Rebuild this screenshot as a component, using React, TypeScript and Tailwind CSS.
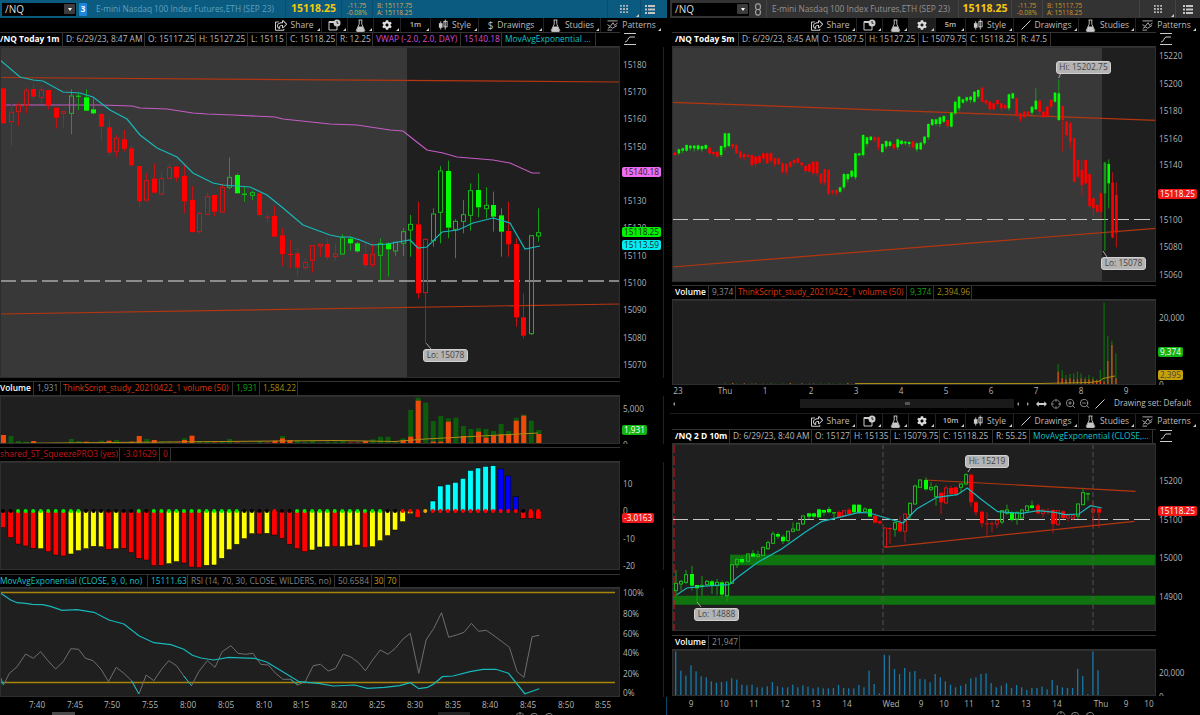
import { ReactNode } from 'react'
import clsx from 'clsx'
import { twMerge } from 'tailwind-merge'
import { FaCog, FaRegShareSquare } from 'react-icons/fa'
import { Crosshair, ZoomIn, ZoomOut } from 'lucide-react'

// Chart data is kept in reference coordinates and mapped onto page pixels.

type Candle = [number, number, number, number, string]

const CANDLES_1M: Candle[] = [
  [25, 25, 130, 130, 'Rf'], [70, 97, 125, 200, 'Rh'], [68, 76, 95, 138, 'Rh'], [25, 32, 76, 100, 'Rh'],
  [12, 27, 50, 58, 'Rf'], [18, 30, 52, 70, 'Rh'], [30, 30, 76, 88, 'Rf'], [83, 83, 113, 145, 'Rf'],
  [95, 95, 100, 143, 'Rh'], [28, 48, 100, 163, 'Gh'], [38, 47, 50, 90, 'Gf'], [28, 52, 92, 92, 'Gf'],
  [57, 88, 100, 103, 'Gf'], [100, 102, 140, 183, 'Rf'], [115, 142, 218, 228, 'Rf'], [165, 175, 214, 232, 'Rh'],
  [150, 178, 206, 215, 'Rf'], [198, 205, 256, 260, 'Rf'], [258, 258, 364, 382, 'Rf'], [280, 302, 360, 365, 'Rh'],
  [250, 296, 338, 340, 'Rf'], [275, 296, 342, 345, 'Rh'], [250, 263, 295, 298, 'Rh'], [258, 260, 293, 305, 'Rf'],
  [255, 288, 364, 400, 'Rf'], [318, 360, 456, 458, 'Rf'], [395, 400, 455, 462, 'Rh'], [338, 350, 403, 405, 'Rh'],
  [345, 345, 395, 408, 'Rf'], [310, 322, 396, 398, 'Rh'], [233, 292, 322, 328, 'Gh'], [280, 285, 340, 340, 'Gf'],
  [318, 341, 344, 365, 'Gf'], [332, 338, 346, 360, 'Gh'], [338, 340, 405, 408, 'Rf'], [400, 410, 413, 428, 'Rf'],
  [378, 408, 470, 470, 'Rf'], [445, 466, 522, 558, 'Rf'], [480, 522, 525, 565, 'Rf'], [505, 520, 563, 590, 'Rf'],
  [535, 548, 562, 570, 'Rh'], [495, 497, 541, 578, 'Rh'], [492, 493, 498, 530, 'Rh'], [475, 492, 532, 540, 'Rf'],
  [490, 522, 530, 542, 'Rh'], [462, 473, 522, 523, 'Gh'], [470, 476, 490, 512, 'Gf'], [485, 490, 514, 518, 'Gf'],
  [485, 522, 556, 565, 'Rf'], [490, 524, 554, 562, 'Rh'], [475, 490, 526, 600, 'Gh'], [487, 490, 508, 590, 'Gf'],
  [485, 487, 513, 528, 'Gh'], [445, 455, 490, 528, 'Gh'], [405, 433, 450, 530, 'Gh'], [365, 433, 640, 655, 'Rf'],
  [475, 478, 638, 790, 'Rh'], [385, 402, 482, 500, 'Gh'], [258, 273, 397, 490, 'Gh'], [242, 273, 443, 475, 'Gf'],
  [418, 424, 448, 535, 'Gh'], [360, 404, 424, 460, 'Gh'], [310, 332, 406, 452, 'Gh'], [280, 330, 382, 412, 'Gf'],
  [322, 376, 386, 415, 'Gh'], [335, 375, 410, 455, 'Gf'], [385, 406, 455, 530, 'Gf'], [365, 453, 493, 530, 'Rf'],
  [475, 492, 712, 740, 'Rf'], [640, 712, 767, 775, 'Rf'], [465, 467, 761, 765, 'Gh'], [385, 458, 468, 485, 'Gh'],
]

// top, bottom, colour, optional wick top / bottom
type Bar5 = [number, number, string, number?, number?]

const CANDLES_5M: Bar5[] = [
  [338, 345, 'R'], [328, 340, 'G'], [325, 332, 'G'], [315, 332, 'G'], [317, 325, 'G'], [317, 325, 'G'], [316, 328, 'G'], [318, 328, 'G'],
  [315, 326, 'G'], [323, 340, 'R'], [336, 342, 'R'], [335, 350, 'R'], [318, 345, 'G'], [280, 322, 'G'], [280, 318, 'G'], [313, 320, 'R'],
  [316, 340, 'R'], [335, 352, 'R'], [342, 352, 'R'], [345, 350, 'R'], [345, 375, 'R'], [350, 372, 'R'], [348, 368, 'R'], [340, 356, 'R'],
  [340, 370, 'R'], [340, 362, 'R'], [355, 373, 'R'], [355, 372, 'R'], [370, 395, 'R'], [372, 395, 'R'], [366, 380, 'R'], [360, 368, 'R'],
  [355, 368, 'R'], [368, 376, 'R'], [378, 393, 'R'], [372, 395, 'R'], [365, 400, 'R'], [365, 400, 'R'], [402, 428, 'R'], [388, 428, 'R'],
  [390, 462, 'R'], [452, 458, 'R'], [450, 460, 'R'], [442, 455, 'G'], [402, 442, 'G'], [402, 418, 'G'], [392, 410, 'G'], [340, 412, 'G'],
  [340, 346, 'G'], [285, 345, 'G'], [292, 312, 'G'], [290, 300, 'G'], [292, 300, 'R'], [292, 322, 'R'], [312, 336, 'G'], [303, 320, 'G'],
  [305, 318, 'G'], [312, 325, 'R'], [298, 322, 'G'], [302, 312, 'G'], [305, 310, 'G'], [306, 312, 'G'], [304, 322, 'R'], [310, 328, 'G'],
  [308, 328, 'G'], [290, 310, 'G'], [252, 292, 'G'], [238, 255, 'G'], [238, 252, 'G'], [232, 252, 'G'], [228, 245, 'G'], [240, 258, 'R'],
  [218, 260, 'G'], [185, 220, 'G'], [170, 205, 'G'], [178, 188, 'G'], [172, 182, 'G'], [170, 180, 'G'], [155, 185, 'G'], [150, 170, 'G'],
  [143, 185, 'R'], [180, 190, 'R'], [185, 207, 'R'], [190, 208, 'R'], [180, 192, 'R'], [190, 205, 'R'], [195, 205, 'R'], [163, 205, 'G'],
  [160, 175, 'G'], [175, 225, 'R'], [220, 238, 'R'], [215, 232, 'R'], [215, 225, 'R'], [200, 218, 'G'], [182, 208, 'G', 145, 210], [182, 215, 'R'],
  [215, 232, 'R'], [200, 228, 'R'], [180, 200, 'R'], [158, 185, 'G'], [160, 240, 'G', 118, 243], [198, 240, 'R', 198, 335], [245, 285, 'R'], [250, 305, 'R', 245, 325],
  [295, 425, 'R'], [360, 410, 'R'], [390, 435, 'R', 360, 465], [360, 430, 'R'], [402, 498, 'R'], [475, 505, 'R', 470, 530], [495, 515, 'R'], [460, 515, 'R', 455, 535],
  [368, 460, 'D', 365, 632], [372, 430, 'G', 358, 505], [428, 592, 'R', 397, 595], [465, 578, 'R', 427, 622],
]

const CANDLES_10M: Candle[] = [
  [378, 418, 440, 458, 'Gh'], [408, 412, 420, 440, 'Gh'], [378, 392, 415, 420, 'Gh'], [366, 390, 425, 440, 'Gf'], [423, 423, 433, 472, 'Gf'],
  [396, 424, 428, 455, 'Gh'], [408, 412, 422, 425, 'Gh'], [408, 412, 425, 450, 'Gf'], [405, 415, 425, 452, 'Gh'], [410, 415, 452, 458, 'Gf'],
  [412, 415, 455, 472, 'Gh'], [360, 362, 418, 420, 'Gh'], [344, 346, 362, 372, 'Gh'], [338, 345, 355, 360, 'Gf'], [328, 330, 352, 355, 'Gh'],
  [318, 328, 338, 340, 'Gf'], [320, 332, 338, 340, 'Gh'], [308, 310, 334, 336, 'Gh'], [290, 296, 314, 318, 'Gh'], [262, 270, 298, 300, 'Gh'],
  [265, 270, 278, 285, 'Gf'], [272, 278, 292, 300, 'Gf'], [260, 262, 290, 295, 'Gh'], [235, 255, 262, 265, 'Gh'], [235, 238, 258, 260, 'Gh'],
  [214, 216, 240, 242, 'Gh'], [206, 208, 218, 225, 'Gf'], [206, 208, 218, 222, 'Gf'], [194, 196, 220, 222, 'Gf'], [196, 198, 206, 215, 'Gf'],
  [188, 195, 205, 208, 'Gf'], [205, 205, 207, 222, 'Gf'], [200, 204, 220, 222, 'Rf'], [198, 200, 215, 218, 'Rh'], [192, 197, 210, 212, 'Rf'],
  [180, 182, 205, 208, 'Gf'], [180, 182, 205, 210, 'Gf'], [190, 195, 203, 206, 'Gh'], [192, 195, 218, 220, 'Gf'], [210, 216, 236, 238, 'Rf'],
  [228, 232, 238, 242, 'Rf'], [250, 252, 308, 310, 'Rh'], [250, 252, 254, 300, 'Rf'], [232, 236, 256, 278, 'Gh'], [218, 236, 262, 265, 'Rf'],
  [208, 210, 262, 295, 'Rh'], [175, 178, 212, 225, 'Gh'], [122, 126, 180, 182, 'Gh'], [106, 108, 130, 132, 'Gh'], [100, 108, 136, 140, 'Gf'],
  [115, 130, 136, 142, 'Gh'], [122, 128, 158, 185, 'Gh'], [145, 146, 175, 210, 'Rf'], [125, 132, 177, 180, 'Rh'], [125, 132, 150, 155, 'Rf'],
  [128, 130, 150, 155, 'Rf'], [118, 120, 130, 148, 'Gh'], [88, 92, 120, 124, 'Gh'], [90, 92, 175, 188, 'Rf'], [172, 175, 205, 215, 'Rf'],
  [200, 203, 238, 250, 'Rf'], [205, 238, 241, 275, 'Rf'], [232, 238, 241, 265, 'Rf'], [228, 230, 240, 252, 'Rh'], [198, 200, 234, 240, 'Gh'],
  [182, 198, 208, 212, 'Gh'], [202, 205, 228, 232, 'Gf'], [203, 205, 225, 242, 'Gh'], [195, 198, 222, 225, 'Gh'], [184, 186, 200, 205, 'Gh'],
  [170, 184, 192, 195, 'Gf'], [180, 184, 208, 212, 'Rf'], [195, 198, 208, 220, 'Rh'], [192, 200, 205, 212, 'Rf'], [196, 198, 240, 268, 'Rf'],
  [198, 200, 242, 245, 'Rh'], [198, 202, 222, 225, 'Rf'], [210, 215, 222, 232, 'Rh'], [212, 214, 222, 228, 'Rh'], [178, 180, 216, 225, 'Gh'],
  [135, 146, 182, 184, 'Gh'], [148, 148, 150, 170, 'Gf'], [175, 196, 204, 250, 'Rh'], [190, 194, 206, 252, 'Rf'],
]

const VOL_10M = [
  622, 680, 695, 664, 682, 697, 700, 712, 716, 714, 712, 703, 707, 722, 724, 722, 730, 730, 727, 714, 727, 730, 730, 722, 730,
  724, 728, 733, 730, 733, 733, 732, 723, 732, 733, 733, 723, 730, 680, 720, 748, 632, 634, 675, 690, 672, 683, 681, 705, 706,
  715, 690, 700, 712, 722, 730, 725, 720, 703, 700, 690, 688, 717, 730, 725, 718, 732, 723, 730, 738, 732, 732, 728, 736, 708,
  724, 730, 732, 732, 675, 696, 750, 622, 679,
]

const VOL_1M: [number, number][] = [
  [208, 180], [183, 208], [198, 208], [200, 208], [208, 198], [203, 208], [208, 204], [203, 208], [203, 208], [192, 208], [198, 208], [208, 200],
  [203, 208], [197, 208], [208, 197], [195, 208], [203, 208], [208, 200], [208, 183], [192, 208], [208, 195], [200, 208], [200, 208], [208, 203],
  [190, 195], [208, 182], [198, 208], [198, 208], [208, 203], [198, 208], [192, 208], [208, 203], [203, 208], [208, 204], [198, 208], [208, 203],
  [208, 197], [183, 190], [208, 195], [195, 208], [200, 208], [197, 208], [203, 208], [200, 208], [200, 208], [198, 208], [208, 203], [208, 203],
  [208, 198], [193, 208], [185, 208], [185, 208], [200, 208], [190, 195], [105, 185], [68, 77], [83, 208], [138, 200], [123, 200], [130, 140],
  [128, 205], [153, 183], [162, 203], [160, 170], [162, 188], [168, 182], [147, 178], [168, 178], [128, 137], [119, 122], [137, 208], [165, 177],
]

const SQUEEZE: [string, number, string][] = [
  ['R', 458, 'k'], ['R', 488, 'k'], ['R', 507, 'g'], ['R', 513, 'g'], ['R', 520, 'g'], ['Y', 521, 'g'], ['R', 530, 'g'], ['R', 540, 'g'], ['R', 543, 'g'],
  ['Y', 537, 'g'], ['Y', 527, 'g'], ['Y', 521, 'k'], ['Y', 514, 'k'], ['Y', 515, 'k'], ['R', 523, 'k'], ['Y', 521, 'k'], ['R', 520, 'k'], ['R', 533, 'k'],
  ['R', 550, 'g'], ['R', 555, 'k'], ['R', 572, 'g'], ['R', 572, 'g'], ['Y', 566, 'g'], ['Y', 560, 'g'], ['R', 564, 'g'], ['R', 576, 'g'], ['R', 578, 'g'],
  ['Y', 571, 'g'], ['Y', 570, 'g'], ['Y', 550, 'g'], ['Y', 524, 'g'], ['Y', 508, 'g'], ['Y', 491, 'k'], ['Y', 476, 'k'], ['R', 477, 'k'], ['Y', 475, 'k'],
  ['R', 480, 'r'], ['R', 490, 'k'], ['R', 508, 'k'], ['R', 521, 'g'], ['R', 530, 'g'], ['Y', 525, 'g'], ['Y', 516, 'g'], ['Y', 515, 'g'],
  ['R', 515, 'g'], ['Y', 515, 'g'], ['Y', 513, 'g'], ['Y', 510, 'g'], ['R', 518, 'g'], ['Y', 515, 'g'], ['Y', 497, 'g'], ['Y', 482, 'k'], ['Y', 465, 'k'],
  ['Y', 440, 'r'], ['Y', 416, 'r'], ['R', 428, 'r'], ['N', 408, 'o'], ['C', 378, 'r'], ['C', 333, 'r'], ['C', 328, 'r'], ['C', 322, 'r'], ['C', 310, 'r'],
  ['C', 286, 'r'], ['C', 279, 'r'], ['C', 274, 'r'], ['C', 272, 'r'], ['B', 282, 'r'], ['B', 303, 'r'], ['B', 365, 'r'], ['R', 430, 'k'], ['R', 430, 'r'], ['R', 432, 'r'],
]

const SQUEEZE_FILL: Record<string, string> = { R: '#ff0000', Y: '#ffff00', C: '#00ffff', B: '#0000ff', N: 'none' }
const DOT_FILL: Record<string, string> = { k: '#000000', g: '#00ee00', r: '#ff0000', o: '#e8a800' }

const VWAP_1M = 'M0 105 L33 105 L100 105 L132 106 L140 108 L167 109 L193 113 L207 114 L233 115 L275 117 L283 119 L330 124 L357 125 L390 130 L403 131 L413 139 L427 150 L443 153 L457 157 L493 160 L510 163 L532 173 L540 173'
const EMA_1M = 'M0 60 L20 77 L33 80 L43 81 L63 92 L80 93 L93 97 L110 110 L127 119 L140 135 L157 148 L177 157 L193 173 L213 183 L223 185 L250 187 L267 195 L283 208 L303 225 L330 235 L340 237 L350 237 L360 240 L372 245 L387 244 L410 240 L418 248 L427 247 L442 232 L458 230 L473 223 L493 218 L510 223 L525 249 L540 246'
const RSI_GRAY: [number, number][] = [[8, 345], [22, 310], [40, 290], [60, 252], [78, 265], [95, 245], [112, 272], [130, 297], [148, 275], [166, 236], [184, 238], [200, 265], [218, 272], [236, 297], [254, 335], [272, 292], [290, 310], [308, 332], [325, 372], [342, 315], [360, 332], [378, 298], [395, 272], [413, 287], [430, 318], [448, 347], [465, 305], [485, 272], [503, 292], [520, 245], [540, 227], [557, 250], [575, 253], [592, 250], [610, 283], [628, 285], [645, 310], [662, 328], [680, 328], [697, 345], [715, 333], [733, 287], [750, 283], [768, 303], [785, 295], [803, 253], [820, 260], [838, 277], [855, 302], [872, 270], [890, 240], [908, 253], [925, 235], [943, 207], [960, 190], [980, 310], [997, 210], [1015, 175], [1033, 128], [1050, 202], [1068, 195], [1086, 187], [1103, 160], [1120, 184], [1138, 181], [1156, 197], [1175, 215], [1192, 232], [1210, 305], [1226, 322], [1245, 200], [1262, 196]]
const RSI_TEAL: [number, number][] = [[0, 68], [25, 90], [40, 98], [60, 100], [75, 103], [100, 104], [120, 110], [145, 121], [180, 119], [220, 127], [255, 150], [290, 162], [325, 197], [360, 218], [400, 224], [430, 238], [450, 256], [470, 264], [500, 270], [535, 262], [595, 265], [625, 277], [655, 300], [700, 335], [745, 340], [780, 348], [830, 345], [860, 355], [900, 352], [935, 347], [960, 338], [980, 356], [1000, 352], [1015, 342], [1035, 320], [1060, 318], [1100, 305], [1130, 298], [1160, 298], [1190, 310], [1228, 371], [1262, 356]]
const EMA_10M: [number, number][] = [[20, 452], [50, 432], [120, 425], [175, 422], [200, 400], [260, 355], [330, 315], [400, 265], [450, 232], [500, 220], [560, 205], [590, 207], [640, 222], [690, 237], [730, 195], [790, 160], [850, 152], [880, 132], [920, 165], [970, 203], [1040, 208], [1090, 200], [1140, 205], [1170, 212], [1210, 210], [1245, 185], [1278, 192]]
const SPIKES_5M: [number, number, number][] = [[1147, 252, 275], [1159, 270, 295], [1170, 285, 298], [1182, 282, 295], [1193, 280, 298], [1204, 275, 298], [1215, 280, 295], [1227, 292, 298], [1238, 285, 298], [1250, 290, 298], [1261, 298, 302], [1272, 270, 300], [1283, 68, 305], [1294, 168, 243], [1306, 182, 195], [1318, 220, 295]]

const toPath = (pts: [number, number][], fx: (n: number) => number, fy: (n: number) => number) =>
  pts.map(([x, y], i) => `${i ? 'L' : 'M'}${fx(x).toFixed(1)} ${fy(y).toFixed(1)}`).join(' ')

const rsiX = (z: number) => z / 2.34
const rsiY = (z: number) => 570 + z / 3
const rx = (z: number) => 670 + z / 2.96

function Stick({ x, w, wt, t, b, wb, kind }: { x: number; w: number; wt: number; t: number; b: number; wb: number; kind: string }) {
  const green = kind[0] === 'G'
  const filled = kind[1] === 'f'
  const wick = green ? '#14a014' : '#c01212'
  const body = green ? '#00ff00' : '#ff0000'
  const outline = green ? '#18b818' : '#d01414'
  // snap to whole pixels so hollow outlines stay sharp
  const left = Math.round(x - w / 2)
  const size = Math.round(w)
  const mid = left + size / 2
  return (
    <g>
      <line x1={mid} x2={mid} y1={wt} y2={t} stroke={wick} />
      <line x1={mid} x2={mid} y1={b} y2={wb} stroke={wick} />
      {filled ? (
        <rect x={left} y={t} width={size} height={Math.max(b - t, 1)} fill={body} />
      ) : (
        <rect x={left + 0.5} y={t} width={size - 1} height={Math.max(b - t, 1)} fill="none" stroke={outline} strokeWidth={1} />
      )}
    </g>
  )
}

function Plot({ box, className, children, overlay }: { box: string; className?: string; children: ReactNode; overlay?: ReactNode }) {
  return (
    <div className={clsx('relative overflow-hidden bg-[#1f1f1f]', className)}>
      <svg viewBox={box} preserveAspectRatio="none" className="block h-full w-full">
        {children}
      </svg>
      <span className="pointer-events-none absolute inset-0 border border-[#2e2e2e]" />
      {overlay}
    </div>
  )
}

function Callout({ className, children }: { className: string; children: ReactNode }) {
  return (
    <div className={clsx('absolute flex h-[13px] items-center justify-center rounded-[3px] border border-[#d0d0d0] bg-[#b4b4b4] text-[8.4px] whitespace-nowrap text-[#444]', className)}>
      {children}
    </div>
  )
}

type AxisBadge = [number, string, string]

function Axis({ top, labels, badges = [], className }: { top: number; labels: [number, string][]; badges?: AxisBadge[]; className: string }) {
  return (
    <div className={clsx('relative shrink-0 overflow-hidden text-[8.2px] leading-none text-[#b4b4b4]', className)}>
      {labels.map(([y, t]) => (
        <span key={t} className="absolute left-[3px] -translate-y-1/2 whitespace-nowrap" style={{ top: y - top }}>
          {t}
        </span>
      ))}
      {badges.map(([y, t, c]) => (
        <span key={t} className={clsx('absolute left-[2px] flex h-[10px] -translate-y-1/2 items-center rounded-[2px] px-[2px] text-[8.2px] whitespace-nowrap', c)} style={{ top: y - top }}>
          {t}
        </span>
      ))}
    </div>
  )
}

function Cell({ className, children }: { className: string; children?: ReactNode }) {
  return (
    <div className={twMerge('flex h-full shrink-0 items-center overflow-hidden border-r border-[#333] pl-[3px] whitespace-nowrap', className)}>
      {children}
    </div>
  )
}

function AxisMark() {
  return (
    <svg viewBox="0 0 14 14" className="ml-[3px] h-[14px] w-[14px] text-[#ccc]" fill="none" stroke="currentColor" strokeWidth={1}>
      <path d="M1 1.5h12M1 12.5h12M2 10c3 0 3-5 5-5h5" />
    </svg>
  )
}

function Corner() {
  return <span className="absolute right-[1px] bottom-[1px] h-0 w-0 border-b-[3px] border-l-[3px] border-b-[#ccc] border-l-transparent" />
}

function Flask() {
  return (
    <svg viewBox="0 0 12 14" className="h-[13px] w-[11px]">
      <path d="M4 1h4M4.6 1v4.5L1.5 12.2c-.3.6 0 1.3.8 1.3h7.4c.8 0 1.1-.7.8-1.3L7.4 5.5V1" fill="none" stroke="#c8c8c8" strokeWidth="1" />
      <path d="M3.6 8h4.8l2 4.6-.5.6H2.100l-.5-.6z" fill="#c8c8c8" />
    </svg>
  )
}

function CalendarClock() {
  return (
    <svg viewBox="0 0 13 12" className="h-[12px] w-[13px]">
      <path d="M1 2.500h8v8.500H1z" fill="none" stroke="#ccc" />
      <path d="M1 2h7v2H1z" fill="#ccc" />
      <circle cx="9" cy="4" r="3.500" fill="#ccc" />
      <path d="M9 2v2.300h1.500" fill="none" stroke="#000" strokeWidth=".8" />
    </svg>
  )
}

function StyleIcon() {
  return (
    <svg viewBox="0 0 11 12" className="h-[12px] w-[10px]">
      <path d="M3 2v9M8 0v11" stroke="#ccc" />
      <rect x="1" y="4" width="4" height="5" fill="#ccc" />
      <rect x="6.500" y="2" width="3.500" height="6" fill="none" stroke="#ccc" />
    </svg>
  )
}

function LineIcon() {
  return (
    <svg viewBox="0 0 10 10" className="h-[10px] w-[10px]">
      <path d="M.5 9.500l9-9" stroke="#ccc" />
    </svg>
  )
}

function PatternIcon() {
  return (
    <svg viewBox="0 0 12 12" className="h-[11px] w-[11px]" fill="none" stroke="#ccc" strokeWidth=".9">
      <path d="M.5 1h11M.5 11h5M.5 5l3 2 3-4 2 3 3-3M1 9l3-1.500 2 1.500 5-3" />
    </svg>
  )
}

function Tool({ className, children }: { className: string; children: ReactNode }) {
  return (
    <div className={clsx('relative flex h-full shrink-0 items-center justify-center gap-[4px] border-r border-[#222]', className)}>
      {children}
      <Corner />
    </div>
  )
}

function Toolbar({ pad, span, gear, frame, drawIcon }: { pad: string; span: string; gear?: string; frame: string; drawIcon: ReactNode }) {
  return (
    <div className={clsx('flex h-[14px] items-center bg-black text-[8.5px] text-[#bdbdbd]', pad)}>
      <Tool className={span}>
        <FaRegShareSquare className="h-[11px] w-[12px] text-[#ccc]" />
        <span>Share</span>
      </Tool>
      <Tool className="w-[26px]"><CalendarClock /></Tool>
      <Tool className="w-[26px]"><Flask /></Tool>
      <Tool className={clsx('w-[27px]', gear)}><FaCog className="h-[10px] w-[10px] text-[#ddd]" /></Tool>
      <Tool className="w-[30px]"><span className="text-[7.5px] font-semibold">{frame}</span></Tool>
      <Tool className="w-[48px]"><StyleIcon /><span>Style</span></Tool>
      <Tool className="w-[65px]">{drawIcon}<span>Drawings</span></Tool>
      <Tool className="w-[57px]"><Flask /><span>Studies</span></Tool>
      <Tool className="w-[61px] border-r-0"><PatternIcon /><span>Patterns</span></Tool>
    </div>
  )
}

function GridGlyph() {
  return (
    <svg viewBox="0 0 9 9" className="h-[8px] w-[8px]" fill="#bbb">
      <path d="M0 0h2v2H0zM3.500 0h2v2h-2zM7 0h2v2H7zM0 3.500h2v2H0zM3.500 3.500h2v2h-2zM7 3.500h2v2H7zM0 7h2v2H0zM3.500 7h2v2h-2zM7 7h2v2H7z" />
    </svg>
  )
}

function ListGlyph() {
  return (
    <svg viewBox="0 0 10 9" className="h-[9px] w-[10px]" fill="#c4c4c4">
      <path d="M0 0h2v2H0zM3 0h7v2H3zM0 3.500h2v2H0zM3 3.500h7v2H3zM0 7h2v2H0zM3 7h7v2H3z" />
    </svg>
  )
}

function SymbolBox({ className }: { className: string }) {
  return (
    <div className={clsx('ml-[2px] flex h-[13px] items-center justify-between bg-black pl-[3px] text-[10px] text-[#ddd]', className)}>
      /NQ
      <span className="mr-[1px] flex h-[10px] w-[11px] items-center justify-center rounded-[1px] bg-[#3c3c3c]">
        <span className="h-0 w-0 border-x-[2.500px] border-t-[3px] border-x-transparent border-t-white" />
      </span>
    </div>
  )
}

function Quote({ priceCell, changeCell, bidCell, tone, sep }: { priceCell: string; changeCell: string; bidCell: string; tone: string; sep: string }) {
  return (
    <>
      <div className={clsx('flex h-full shrink-0 items-center justify-center border-r text-[10.5px] font-bold text-[#f4c70f]', priceCell, sep)}>15118.25</div>
      <div className={clsx('flex h-full shrink-0 flex-col items-center justify-center border-r text-[6.5px] leading-[7px]', changeCell, tone, sep)}>
        <span>-11.75</span>
        <span>-0.08%</span>
      </div>
      <div className={clsx('flex h-full shrink-0 flex-col justify-center pl-[4px] text-[6.500px] leading-[7px]', bidCell, tone)}>
        <span>B: 15117.75</span>
        <span>A: 15118.25</span>
      </div>
    </>
  )
}

function ChainIcon() {
  return (
    <svg viewBox="0 0 8 14" className="h-[13px] w-[8px]" fill="none" stroke="#aaa" strokeWidth="1.200">
      <rect x="1.500" y="1" width="5" height="6" rx="2" />
      <rect x="1.500" y="7" width="5" height="6" rx="2" />
    </svg>
  )
}

function LeftPanel() {
  return (
    <div className="flex w-[670px] shrink-0 flex-col">
      {/* Symbol header */}
      <div className="flex h-[18px] w-[667px] items-center bg-[#0b5a80] pr-[8px]">
        <SymbolBox className="w-[74px]" />
        <span className="mt-[0px] ml-[3px] flex h-[13px] w-[8px] items-center justify-center rounded-[1px] bg-[#1b86dc] text-[8px] font-bold text-white">3</span>
        <div className="flex h-full w-[199px] shrink-0 items-center border-r border-[#0a4d6e] pl-[9px] text-[8.3px] whitespace-nowrap text-[#5da0bd]">
          E-mini Nasdaq 100 Index Futures,ETH (SEP 23)
        </div>
        <Quote priceCell="w-[56px]" changeCell="w-[31px]" bidCell="w-[234px]" tone="text-[#cfb14e]" sep="border-[#0a4d6e]" />
        <div className="relative flex h-full w-[34px] items-center justify-center border-x border-[#0a4d6e]"><GridGlyph /><Corner /></div>
        <div className="flex h-full flex-1 items-center justify-center"><ListGlyph /></div>
      </div>
      <Toolbar pad="pl-[267px]" span="w-[55px]" frame="1m" drawIcon={<span className="text-[10px]">$</span>} />

      {/* Price pane */}
      <div className="flex h-[15px] bg-black text-[8.4px]">
        <div className="flex h-full w-[620px] shrink-0 items-center border-y border-[#333]">
          <Cell className="w-[63px] pl-0 font-bold text-white">/NQ Today 1m</Cell>
          <Cell className="w-[82px] text-[#b8b8b8]">D: 6/29/23, 8:47 AM</Cell>
          <Cell className="w-[51px] text-[#b8b8b8]">O: 15117.25</Cell>
          <Cell className="w-[52px] text-[#b8b8b8]">H: 15127.25</Cell>
          <Cell className="w-[39px] text-[#b8b8b8]">L: 15115</Cell>
          <Cell className="w-[50px] text-[#b8b8b8]">C: 15118.25</Cell>
          <Cell className="w-[36px] text-[#b8b8b8]">R: 12.25</Cell>
          <Cell className="w-[88px] text-[#d24fd6]">VWAP (-2.0, 2.0, DAY)</Cell>
          <Cell className="w-[41px] text-[#d24fd6]">15140.18</Cell>
          <Cell className="w-[94px] text-[#16c0c8]">MovAvgExponential ...</Cell>
        </div>
        <AxisMark />
      </div>
      <div className="flex h-[331px]">
        <Plot
          box="0 47 620 331"
          className="w-[620px]"
          overlay={<Callout className="top-[302px] left-[423px] w-[45px]">Lo: 15078</Callout>}
        >
          <rect x="0" y="47" width="407" height="331" fill="#383838" />
          <rect x="407" y="47" width="213" height="331" fill="#1f1f1f" />
          <line x1="0" x2="620" y1="77.500" y2="82" stroke="#b5350f" strokeWidth="1.200" />
          <line x1="0" x2="620" y1="314" y2="304" stroke="#b5350f" strokeWidth="1.200" />
          <line x1="0" x2="620" y1="281" y2="281" stroke="#a8a8a8" strokeWidth="1.600" strokeDasharray="16 5" />
          <path d={VWAP_1M} fill="none" stroke="#c45cc4" strokeWidth="1.200" />
          {CANDLES_1M.map(([wt, t, b, wb, k], i) => (
            <Stick key={i} x={3.5 + 7.54 * i} w={5} wt={80 + wt / 3} t={80 + t / 3} b={80 + b / 3} wb={80 + wb / 3} kind={k} />
          ))}
          <path d={EMA_1M} fill="none" stroke="#17b8ba" strokeWidth="1.200" />
          <path d="M426.300 343.300L431 349" stroke="#aaa" />
        </Plot>
        <Axis
          top={47}
          className="w-[44px] border-r border-[#222]"
          labels={[[65, '15180'], [92, '15170'], [119, '15160'], [147, '15150'], [201, '15130'], [228, '15120'], [256, '15110'], [283, '15100'], [310, '15090'], [338, '15080'], [365, '15070']]}
          badges={[
            [172, '15140.18', 'bg-[#ef6cf0] text-[#222]'],
            [232, '15118.25', 'bg-[#00f000] text-[#222]'],
            [245, '15113.59', 'bg-[#00eeee] text-[#222]'],
          ]}
        />
      </div>

      {/* Volume pane */}
      <div className="mt-[3px] flex h-[15px] w-[620px] items-center border-y border-[#333] bg-black text-[8.4px]">
        <Cell className="w-[34px] pl-0 font-semibold text-white">Volume</Cell>
        <Cell className="w-[27px] text-[#7f96ad]">1,931</Cell>
        <Cell className="w-[172px] pl-[2px] text-[8.3px] text-[#d8360c]">ThinkScript_study_20210422_1 volume (50)</Cell>
        <Cell className="w-[27px] text-[#12a012]">1,931</Cell>
        <Cell className="w-[38px] text-[#a08a10]">1,584.22</Cell>
      </div>
      <div className="flex h-[48px]">
        <Plot box="0 396 620 48" className="w-[620px]">
          {VOL_1M.map(([g, o], i) => {
            const x = 3.5 + 7.54 * i - 2.5
            return (
              <g key={i}>
                {g < 208 && <rect x={x} y={375 + g / 3} width={5} height={(208 - g) / 3} fill="#0c5c0c" />}
                {o < 208 && <rect x={x} y={375 + o / 3} width={5} height={(208 - o) / 3} fill="#f04a0a" />}
              </g>
            )
          })}
          <path d="M0 443.500L335 440.500L395 441.500L425 439L538 433" fill="none" stroke="#b08a10" strokeWidth="1" />
        </Plot>
        <Axis
          top={396}
          className="w-[44px] border-r border-[#222]"
          labels={[[409, '5,000'], [445, '0']]}
          badges={[[430, '1,931', 'bg-[#12b412] text-white']]}
        />
      </div>

      {/* Squeeze pane */}
      <div className="mt-[3px] flex h-[15px] w-[620px] items-center border-y border-[#333] bg-black text-[8.4px]">
        <Cell className="w-[120px] pl-0 text-[#c01818]">shared_ST_SqueezePRO3 (yes)</Cell>
        <Cell className="w-[40px] text-[#c01818]">-3.01629</Cell>
        <Cell className="w-[11px] text-[#c01818]">0</Cell>
      </div>
      <div className="flex h-[108px]">
        <Plot box="0 462 620 108" className="w-[620px]">
          {SQUEEZE.map(([c, bottom, dot], i) => {
            const x = 3 + 7.54 * i
            const y = 375 + bottom / 3
            return (
              <g key={i}>
                {c !== 'N' && (
                  <rect x={x - 2.700} y={Math.min(511, y)} width={5.400} height={Math.abs(y - 511)} fill={SQUEEZE_FILL[c]} stroke="#000" strokeWidth=".5" />
                )}
                <circle cx={x} cy={511} r={2} fill={DOT_FILL[dot]} />
              </g>
            )
          })}
        </Plot>
        <Axis
          top={462}
          className="w-[44px] border-r border-[#222]"
          labels={[[484, '10'], [511, '0'], [539, '-10'], [566, '-20']]}
          badges={[[518, '-3.0163', 'bg-[#f01818] text-white']]}
        />
      </div>

      {/* RSI pane */}
      <div className="mt-[4px] flex h-[14px] w-[620px] items-center border-y border-[#333] bg-black text-[8.4px]">
        <Cell className="w-[148px] pl-0 text-[#16c0c8]">MovAvgExponential (CLOSE, 9, 0, no)</Cell>
        <Cell className="w-[40px] text-[#16c0c8]">15111.63</Cell>
        <Cell className="w-[147px] text-[#808080]">RSI (14, 70, 30, CLOSE, WILDERS, no)</Cell>
        <Cell className="w-[37px] text-[#808080]">50.6584</Cell>
        <Cell className="w-[13px] pl-[2px] text-[#c89a10]">30</Cell>
        <Cell className="w-[15px] pl-[2px] text-[#c89a10]">70</Cell>
      </div>
      <div className="flex h-[109px]">
        <Plot box="0 588 620 109" className="w-[620px]">
          <line x1="0" x2="615" y1="592.500" y2="592.500" stroke="#a88408" strokeWidth="1.300" />
          <line x1="0" x2="615" y1="682.500" y2="682.500" stroke="#a88408" strokeWidth="1.300" />
          <path d={toPath(RSI_GRAY, rsiX, rsiY)} fill="none" stroke="#6e6e6e" strokeWidth="1" />
          <path d={toPath(RSI_TEAL, rsiX, rsiY)} fill="none" stroke="#17b8ba" strokeWidth="1.200" />
          <path d={toPath([[0, 318], [8, 345]], rsiX, rsiY)} stroke="#17b8ba" />
          <path d={toPath([[308, 332], [325, 372]], rsiX, rsiY)} stroke="#17b8ba" />
          <path d={toPath([[430, 318], [448, 347]], rsiX, rsiY)} stroke="#17b8ba" />
          <path d={toPath([[680, 328], [697, 345]], rsiX, rsiY)} stroke="#17b8ba" />
        </Plot>
        <Axis
          top={588}
          className="w-[44px] border-r border-[#222]"
          labels={[[593, '100%'], [614, '80%'], [634, '60%'], [653, '40%'], [674, '20%'], [693, '0%']]}
        />
      </div>

      {/* Time scale */}
      <div className="relative h-[18px] w-[667px] border-r border-[#0b4a68] text-[8.2px] text-[#b4b4b4]">
        {[[37, '7:40'], [75, '7:45'], [112, '7:50'], [150, '7:55'], [188, '8:00'], [226, '8:05'], [264, '8:10'], [301, '8:15'], [339, '8:20'], [377, '8:25'], [415, '8:30'], [453, '8:35'], [490, '8:40'], [528, '8:45'], [566, '8:50'], [603, '8:55']].map(([x, t]) => (
          <span key={t} className="absolute top-[2px] -translate-x-1/2" style={{ left: x }}>{t}</span>
        ))}
        <span className="absolute bottom-0 left-[52px] h-[3px] w-[23px] bg-[#484848]" />
        <span className="absolute bottom-0 left-[438px] h-[3px] w-[32px] bg-[#222]" />
        <div className="absolute top-[15px] left-[515px] flex gap-[4px] text-[#bdbdbd]">
          <Crosshair className="h-[10px] w-[10px]" strokeWidth={1.500} />
          <ZoomIn className="h-[11px] w-[11px]" strokeWidth={1.500} />
          <ZoomOut className="h-[11px] w-[11px]" strokeWidth={1.500} />
        </div>
      </div>
    </div>
  )
}

function RightPanel() {
  return (
    <div className="flex w-[530px] shrink-0 flex-col">
      <div className="flex h-[18px] items-center bg-[#333]">
        <SymbolBox className="w-[77px]" />
        <span className="ml-[5px]"><ChainIcon /></span>
        <div className="ml-[4px] flex h-full w-[193px] shrink-0 items-center border-x border-[#444] pl-[5px] text-[8.3px] whitespace-nowrap text-[#929292]">
          E-mini Nasdaq 100 Index Futures,ETH (SEP 23)
        </div>
        <Quote priceCell="w-[53px]" changeCell="w-[31px]" bidCell="w-[97px] border-r border-[#444]" tone="text-[#c89a28]" sep="border-[#444]" />
        <div className="relative flex h-full w-[36px] items-center justify-center border-r border-[#444]"><GridGlyph /><Corner /></div>
        <div className="flex h-full flex-1 items-center justify-center"><ListGlyph /></div>
      </div>
      <Toolbar pad="pl-[134px]" span="w-[53px]" gear="bg-[#1e1e1e]" frame="5m" drawIcon={<LineIcon />} />

      {/* 5m price pane */}
      <div className="flex h-[15px] pl-[2px] text-[8.4px]">
        <div className="flex h-full w-[484px] shrink-0 items-center border-y border-[#333] bg-black">
          <Cell className="w-[67px] font-bold text-white">/NQ Today 5m</Cell>
          <Cell className="w-[80px] text-[#b8b8b8]">D: 6/29/23, 8:45 AM</Cell>
          <Cell className="w-[47px] text-[#b8b8b8]">O: 15087.5</Cell>
          <Cell className="w-[53px] text-[#b8b8b8]">H: 15127.25</Cell>
          <Cell className="w-[48px] text-[#b8b8b8]">L: 15079.75</Cell>
          <Cell className="w-[51px] text-[#b8b8b8]">C: 15118.25</Cell>
          <Cell className="w-[33px] text-[#b8b8b8]">R: 47.5</Cell>
        </div>
        <AxisMark />
      </div>
      <div className="flex h-[235px] pl-[2px]">
        <Plot
          box="672 47 484 235"
          className="w-[484px]"
          overlay={
            <>
              <Callout className="top-[14px] left-[384px] w-[55px]">Hi: 15202.75</Callout>
              <Callout className="top-[210px] left-[429px] w-[45px]">Lo: 15078</Callout>
            </>
          }
        >
          <rect x="672" y="47" width="430" height="235" fill="#383838" />
          <rect x="1102" y="47" width="54" height="235" fill="#1f1f1f" />
          <line x1="672" x2="1156" y1="219.500" y2="219.500" stroke="#c8c8c8" strokeWidth="1" strokeDasharray="16 5" />
          <line x1="672" x2="1156" y1="102.300" y2="120.300" stroke="#b5350f" strokeWidth="1.200" />
          <line x1="672" x2="1156" y1="267" y2="228.300" stroke="#b5350f" strokeWidth="1.200" />
          {CANDLES_5M.map(([t, b, c, wt, wb], i) => {
            const x = rx(15 + 11.36 * i)
            const up = wt ?? t - (i * 7) % 7 - 2
            const down = wb ?? b + (i * 11) % 8 + 2
            return (
              <g key={i}>
                <line x1={x} x2={x} y1={40 + up / 3} y2={40 + down / 3} stroke={c === 'R' ? '#c01212' : '#14a014'} />
                <rect x={x - 1.300} y={40 + t / 3} width={2.600} height={Math.max((b - t) / 3, 1)} fill={c === 'R' ? '#ff0000' : c === 'D' ? '#14a014' : '#00ff00'} />
              </g>
            )
          })}
          <path d="M1058.600 78L1061 73M1103 251L1107 257" stroke="#aaa" />
        </Plot>
        <Axis
          top={47}
          className="w-[44px]"
          labels={[[56, '15220'], [84, '15200'], [111, '15180'], [139, '15160'], [165, '15140'], [220, '15100'], [247, '15080'], [275, '15060']]}
          badges={[[194, '15118.25', 'bg-[#f01818] text-white']]}
        />
      </div>

      {/* 5m volume pane */}
      <div className="mt-[3px] ml-[2px] flex h-[15px] w-[484px] items-center border-y border-[#333] bg-black text-[8.4px]">
        <Cell className="w-[37px] font-semibold text-white">Volume</Cell>
        <Cell className="w-[27px] text-[#8a8a8a]">9,374</Cell>
        <Cell className="w-[171px] pl-[2px] text-[8.3px] text-[#d8360c]">ThinkScript_study_20210422_1 volume (50)</Cell>
        <Cell className="w-[27px] text-[#12a012]">9,374</Cell>
        <Cell className="w-[38px] text-[#a08a10]">2,394.96</Cell>
      </div>
      <div className="flex h-[85px] pl-[2px]">
        <Plot box="672 300 484 85" className="w-[484px]">
          {CANDLES_5M.slice(12, 100).map((_, i) => {
            const x = rx(150 + 11.36 * i)
            const h = 0.4 + ((i * 13) % 5) * 0.3
            return <rect key={i} x={x} y={384.500 - h} width={1.100} height={h} fill={i % 3 ? '#0c6a0c' : '#c86a10'} />
          })}
          {SPIKES_5M.map(([zx, g, o]) => (
            <g key={zx}>
              <rect x={rx(zx)} y={280 + g / 3} width={1.300} height={(313 - g) / 3} fill="#0c6a0c" />
              <rect x={rx(zx)} y={280 + o / 3} width={1.300} height={(313 - o) / 3} fill="#e04810" />
            </g>
          ))}
          <path d="M855 383.500L1040 383.500L1090 382.500L1100 381L1103 378.500L1115 376" fill="none" stroke="#a88a10" strokeWidth="1" />
        </Plot>
        <Axis
          top={300}
          className="w-[44px]"
          labels={[[318, '20,000'], [385, '0']]}
          badges={[
            [352, '9,374', 'bg-[#12b412] text-white'],
            [375, '2,395', 'bg-[#c8a008] text-[#444]'],
          ]}
        />
      </div>

      {/* Time scale and scrollbar */}
      <div className="relative h-[13px] text-[8.2px] text-[#b4b4b4]">
        {[[8, '23'], [55, 'Thu'], [95, '1'], [141, '2'], [186, '3'], [231, '4'], [276, '5'], [321, '6'], [366, '7'], [411, '8'], [456, '9']].map(([x, t]) => (
          <span key={t} className="absolute top-0 -translate-x-1/2" style={{ left: x }}>{t}</span>
        ))}
      </div>
      <div className="flex h-[11px] items-center text-[#bdbdbd]">
        <span className="ml-[3px] h-0 w-0 border-y-[2px] border-r-[2.500px] border-y-transparent border-r-[#999]" />
        <div className="ml-[125px] flex h-[9px] w-[214px] items-center justify-center bg-[#1a1a1a]">
          <span className="h-[3px] w-[5px] bg-[#555]" />
        </div>
        <span className="ml-[3px] h-0 w-0 border-y-[2px] border-r-[2.500px] border-y-transparent border-r-[#999]" />
        <span className="ml-[8px] h-0 w-0 border-y-[2px] border-l-[2.500px] border-y-transparent border-l-[#999]" />
        <svg viewBox="0 0 12 8" className="ml-[7px] h-[8px] w-[11px]" fill="#ccc"><path d="M0 4l3-3v2h6V1l3 3-3 3V5H3v2z" /></svg>
        <Crosshair className="ml-[4px] h-[10px] w-[10px]" strokeWidth={1.500} />
        <ZoomIn className="ml-[4px] h-[11px] w-[11px]" strokeWidth={1.500} />
        <ZoomOut className="ml-[3px] h-[11px] w-[11px]" strokeWidth={1.500} />
        <span className="ml-[5px]"><LineIcon /></span>
        <span className="ml-[9px] text-[8.2px] whitespace-nowrap">Drawing set: Default</span>
      </div>
      <div className="h-[5px] border-b border-[#1c1c1c]" />

      <Toolbar pad="pl-[134px]" span="w-[53px]" frame="10m" drawIcon={<LineIcon />} />

      {/* 10m price pane */}
      <div className="mt-[1px] flex h-[15px] pl-[2px] text-[8.4px]">
        <div className="flex h-full w-[484px] shrink-0 items-center border-y border-[#333] bg-black">
          <Cell className="w-[58px] font-bold text-white">/NQ 2 D 10m</Cell>
          <Cell className="w-[82px] text-[#b8b8b8]">D: 6/29/23, 8:40 AM</Cell>
          <Cell className="w-[39px] text-[#b8b8b8]">O: 15127</Cell>
          <Cell className="w-[40px] text-[#b8b8b8]">H: 15135</Cell>
          <Cell className="w-[49px] text-[#b8b8b8]">L: 15079.75</Cell>
          <Cell className="w-[53px] text-[#b8b8b8]">C: 15118.25</Cell>
          <Cell className="w-[37px] text-[#b8b8b8]">R: 55.25</Cell>
          <Cell className="w-[123px] text-[#16c0c8]">MovAvgExponential (CLOSE,...</Cell>
        </div>
        <AxisMark />
      </div>
      <div className="flex h-[187px] pl-[2px]">
        <Plot
          box="672 445 484 187"
          className="w-[484px]"
          overlay={
            <>
              <Callout className="top-[11px] left-[293px] w-[44px]">Hi: 15219</Callout>
              <Callout className="top-[164px] left-[22px] w-[45px]">Lo: 14888</Callout>
            </>
          }
        >
          <rect x="730" y="555.700" width="426" height="10.600" fill="#0f7410" />
          <rect x="672" y="596.700" width="484" height="9" fill="#0f7410" />
          <line x1="674" x2="674" y1="445" y2="632" stroke="#c01818" strokeWidth="1.200" strokeDasharray="9 3" />
          <line x1="883" x2="883" y1="445" y2="632" stroke="#555" strokeDasharray="5 3" />
          <line x1="1093" x2="1093" y1="445" y2="632" stroke="#555" strokeDasharray="5 3" />
          <line x1="672" x2="1156" y1="520.500" y2="520.500" stroke="#c8c8c8" strokeWidth="1" strokeDasharray="16 5" />
          <line x1="925" x2="1135.500" y1="481" y2="492.300" stroke="#b5350f" strokeWidth="1.200" />
          <line x1="885" x2="1134.500" y1="548.300" y2="522.300" stroke="#b5350f" strokeWidth="1.200" />
          {CANDLES_10M.map(([wt, t, b, wb, k], i) => (
            <Stick key={i} x={rx(18 + 15.06 * i)} w={3.600} wt={445 + wt / 3} t={445 + t / 3} b={445 + b / 3} wb={445 + wb / 3} kind={k} />
          ))}
          <path d={toPath(EMA_10M, rx, (z) => 445 + z / 3)} fill="none" stroke="#17b8ba" strokeWidth="1.200" />
          <path d="M968 473L971 468M697 603L701 608" stroke="#aaa" />
        </Plot>
        <Axis
          top={445}
          className="w-[44px]"
          labels={[[482, '15200'], [521, '15100'], [559, '15000'], [598, '14900']]}
          badges={[[512, '15118.25', 'bg-[#f01818] text-white']]}
        />
      </div>

      {/* 10m volume pane */}
      <div className="mt-[4px] ml-[2px] flex h-[15px] w-[484px] items-center border-y border-[#333] bg-black text-[8.4px]">
        <Cell className="w-[37px] font-semibold text-white">Volume</Cell>
        <Cell className="w-[31px] text-[#8a8a8a]">21,947</Cell>
      </div>
      <div className="flex h-[46px] pl-[2px]">
        <Plot box="672 651 484 46" className="w-[484px]">
          {VOL_10M.map((top, i) => (
            <rect key={i} x={rx(15 + 15.06 * i)} y={445 + top / 3} width={1.300} height={(755 - top) / 3} fill="#1678aa" />
          ))}
        </Plot>
        <Axis top={651} className="w-[44px]" labels={[[674, '20,000'], [698, '0']]} />
      </div>

      <div className="relative h-[18px] text-[8.2px] text-[#b4b4b4]">
        {[[21, '9'], [54, '10'], [84, '11'], [115, '12'], [146, '13'], [177, '14'], [221, 'Wed'], [251, '9 '], [274, '10 '], [299, '11 '], [325, '12 '], [356, '13 '], [387, '14 '], [431, 'Thu'], [456, '9  '], [479, '10  ']].map(([x, t]) => (
          <span key={t} className="absolute top-[2px] -translate-x-1/2" style={{ left: x }}>{t}</span>
        ))}
        <div className="absolute top-[15px] left-[386px] flex gap-[4px] text-[#bdbdbd]">
          <Crosshair className="h-[10px] w-[10px]" strokeWidth={1.500} />
          <ZoomIn className="h-[11px] w-[11px]" strokeWidth={1.500} />
          <ZoomOut className="h-[11px] w-[11px]" strokeWidth={1.500} />
        </div>
      </div>
    </div>
  )
}

export default function App() {
  return (
    <div className="flex h-[715px] w-[1200px] overflow-hidden bg-black font-['Open_Sans',sans-serif]">
      <LeftPanel />
      <RightPanel />
    </div>
  )
}
